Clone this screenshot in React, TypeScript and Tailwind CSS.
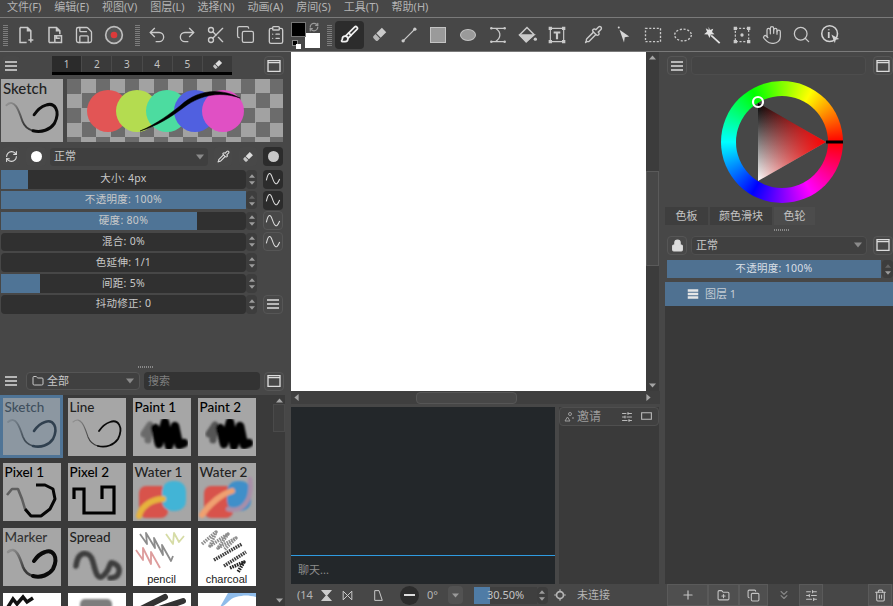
import { Brush, ChevronsDown, ClipboardList, Copy, Folder, FolderPlus, Hand, Lock, Pipette, Plus, RefreshCw, Redo2, Save, Scissors, Search, SlidersHorizontal, Trash2, Undo2 } from 'lucide-react'
import type { ReactNode } from 'react'

const cjk = "font-['Noto_Sans','Noto_Sans_CJK_SC',sans-serif]"

function Svg({ children, size = 20 }: { children: ReactNode; size?: number }) {
  return (
    <svg width={size} height={size} viewBox="0 0 24 24" fill="none" stroke="currentColor" strokeWidth="2">
      {children}
    </svg>
  )
}

function Arrow({ dir, size = 7 }: { dir: 'up' | 'down' | 'left' | 'right'; size?: number }) {
  const points = { up: '0,8 10,8 5,2', down: '0,2 10,2 5,8', left: '8,0 8,10 2,5', right: '2,0 2,10 8,5' }
  return (
    <svg width={size} height={size} viewBox="0 0 10 10" fill="currentColor">
      <polygon points={points[dir]} />
    </svg>
  )
}

function MenuIcon({ size = 16, weight = 2.6 }: { size?: number; weight?: number }) {
  return (
    <Svg size={size}>
      <path d="M3 6h18M3 12h18M3 18h18" strokeWidth={weight} />
    </Svg>
  )
}

function WindowIcon() {
  return (
    <Svg size={16}>
      <path d="M3 4h18v16H3zM3 7h18" strokeWidth="2" />
    </Svg>
  )
}

function SineIcon() {
  return (
    <Svg size={16}>
      <path d="M2 14C5 1 8 1 11 10s6 14 11 2" strokeWidth="1.6" />
    </Svg>
  )
}

function EraserIcon({ size = 19 }: { size?: number }) {
  return (
    <svg width={size} height={size} viewBox="0 0 24 24" fill="currentColor">
      <path d="M15 3.5l5.5 5.5-7 7L8 10.5z" />
      <path d="M7 11.5l5.5 5.5-2.5 2.500a2 2 0 0 1-2.800 0l-2.700-2.700a2 2 0 0 1 0-2.800z" opacity="0.85" />
    </svg>
  )
}

function WandIcon() {
  return (
    <svg width="20" height="20" viewBox="0 0 24 24" fill="currentColor">
      <path d="M12 12l10 9-1.5 1.5L10 13z" />
      <path d="M8 2l1.5 4 4-1.5L12 8.5l3 2.5-4.5.5-1.5 4-2-4-4.5-.5 3.500-3L4.500 4 8 6z" />
    </svg>
  )
}

function PanelButton({ children, className = '' }: { children: ReactNode; className?: string }) {
  return (
    <div className={'flex items-center justify-center h-[19px] w-[20px] shrink-0 rounded-sm border border-[#565656] bg-[#484848] text-[#dcdcdc] ' + className}>
      {children}
    </div>
  )
}

function Grip() {
  return <div className="w-[5px] h-[22px] shrink-0 bg-[repeating-linear-gradient(0deg,#7d7d7d_0_1px,transparent_1px_2px)]" />
}

function Tool({ children, active }: { children: ReactNode; active?: boolean }) {
  return (
    <div className={'flex items-center justify-center w-[29.6px] h-[28px] shrink-0 rounded-sm ' + (active ? 'bg-[#2c2c2c] text-[#f0f0f0]' : 'text-[#cacaca]')}>
      {children}
    </div>
  )
}

function Spinner({ dim }: { dim?: boolean }) {
  return (
    <div className="flex flex-col items-center justify-center gap-px w-[11px] shrink-0 h-full rounded-sm bg-[#3d3d3d] text-[#9c9c9c]">
      <span className={dim ? 'opacity-40' : ''}><Arrow dir="up" size={6} /></span>
      <Arrow dir="down" size={6} />
    </div>
  )
}

const menus = ['文件(F)', '编辑(E)', '视图(V)', '图层(L)', '选择(N)', '动画(A)', '房间(S)', '工具(T)', '帮助(H)']

const sliders = [
  { label: '大小: 4px', pct: 11, curve: 'dark' },
  { label: '不透明度: 100%', pct: 100, curve: 'dark' },
  { label: '硬度: 80%', pct: 80, curve: 'line' },
  { label: '混合: 0%', pct: 0, curve: 'line' },
  { label: '色延伸: 1/1', pct: 0, curve: 'none' },
  { label: '间距: 5%', pct: 16, curve: 'none' },
  { label: '抖动修正: 0', pct: 0, curve: 'menu' },
]

function SliderRow({ label, pct, curve }: { label: string; pct: number; curve: string }) {
  return (
    <div className="flex items-center h-[18.6px] pl-px">
      <div className="relative flex items-center justify-center w-[245px] h-full rounded-sm bg-[#303030] text-[10.5px] tracking-[0.3px] text-[#c9c9c9]">
        <div className="absolute left-0 top-0 bottom-0 bg-[#4f7496]" style={{ width: pct + '%' }} />
        <span className="relative">{label}</span>
      </div>
      <Spinner dim={pct === 100} />
      {curve === 'dark' && <div className="ml-[6px] flex items-center justify-center w-[20px] h-[19px] rounded-sm bg-[#2c2c2c] text-[#dcdcdc]"><SineIcon /></div>}
      {curve === 'line' && <PanelButton className="ml-[6px]"><SineIcon /></PanelButton>}
      {curve === 'menu' && <PanelButton className="ml-[6px]"><MenuIcon /></PanelButton>}
    </div>
  )
}

function Stroke({ id, width = 2.6, thin = 1.6, color = '#0a0a0a' }: { id: string; width?: number; thin?: number; color?: string }) {
  return (
    <>
      <defs>
        <linearGradient id={id} gradientUnits="userSpaceOnUse" x1="5" y1="24" x2="22" y2="42">
          <stop offset="0" stopColor="#8f8f8f" />
          <stop offset="1" stopColor="#3a3a3a" />
        </linearGradient>
      </defs>
      <path d="M5 24C13 17 17 30 20 39C22 44 26 47 30 48" fill="none" stroke={'url(#' + id + ')'} strokeWidth={thin} strokeLinecap="round" />
      <path d="M30 48C38 50 46 47 50 41C56 29 50 21 42 24C36 26 33 30 31 33" fill="none" stroke={color} strokeWidth={width} strokeLinecap="round" />
    </>
  )
}

function Art({ name }: { name: string }) {
  if (name === 'Sketch') return <Stroke id="s1" width={2.6} thin={1.8} color="#232a31" />
  if (name === 'Line') return <Stroke id="s2" width={1.8} thin={1.1} />
  if (name === 'Marker') return <Stroke id="s3" width={4} thin={2.6} />
  if (name === 'Pixel 1')
    return (
      <g fill="none" strokeWidth="2.6" strokeLinejoin="bevel">
        <path d="M4 32L9 26L15 26L19 36L22 46" stroke="#5f5f5f" />
        <path d="M22 46L28 53L38 53L47 46L52 36L50 26L42 22L33 22" stroke="#050505" strokeWidth="3" />
      </g>
    )
  if (name === 'Pixel 2')
    return <path d="M6 36V26H16V50H46V24H34V36" fill="none" stroke="#000" strokeWidth="3.2" />
  if (name === 'Paint 1' || name === 'Paint 2')
    return (
      <g fill="none" strokeLinecap="round" strokeLinejoin="round" filter="url(#soft)">
        <path d="M11 36L17 27L15 42" stroke={name === 'Paint 1' ? '#6a6a6a' : '#555'} strokeWidth="7" />
        <path d="M22 30L26 46L32 24L36 48L42 28L46 47L51 45" stroke="#050505" strokeWidth="8.5" />
      </g>
    )
  if (name === 'Spread')
    return <path d="M8 38C10 22 22 22 25 34S30 54 37 46S40 32 47 36S52 50 42 50" fill="none" stroke="#3c3c3c" strokeWidth="5.5" strokeLinecap="round" filter="url(#soft)" />
  if (name === 'Water 1' || name === 'Water 2')
    return (
      <g filter="url(#soft)">
        <rect x="6" y="23" width="29" height="32" rx="7" fill="#d8534c" />
        <rect x="29" y="18" width="24" height="30" rx="10" fill={name === 'Water 1' ? '#42b4d6' : '#3f8fc9'} />
        <path d={name === 'Water 1' ? 'M6 53C8 44 18 36 30 36' : 'M4 52C12 40 24 31 34 28'} fill="none" stroke={name === 'Water 1' ? '#e6b23c' : '#f0a070'} strokeWidth="6" strokeLinecap="round" />
        {name === 'Water 2' && <path d="M30 46C44 50 55 38 52 16" fill="none" stroke="#a88fa8" strokeWidth="4.5" strokeLinecap="round" />}
      </g>
    )
  if (name === 'pencil')
    return (
      <g fill="none" strokeWidth="1.8" strokeLinejoin="round">
        <path d="M7 6L14 16L13 5L22 20L21 10L30 27L29 17L38 33L40 28" stroke="#8c8c8c" />
        <path d="M33 6L40 16L41 5L46 14L51 8" stroke="#d6dca6" />
        <path d="M3 22L10 32L10 20L18 36L18 24L27 40" stroke="#dd9c9c" />
      </g>
    )
  if (name === 'charcoal')
    return (
      <g fill="none" strokeDasharray="1.6 0.9" strokeLinejoin="round">
        <path d="M4 16L18 4L12 18L30 6L20 20L38 10L26 22" stroke="#8f8f8f" strokeWidth="3.5" />
        <path d="M16 32L44 16M26 38L48 24" stroke="#3c3c3c" strokeWidth="3.5" />
        <path d="M32 40L46 34L40 44" stroke="#222" strokeWidth="3.5" />
      </g>
    )
  if (name === 'ink') return <path d="M5 14L10 6L14 11L20 4L24 9L30 5" fill="none" stroke="#111" strokeWidth="3.5" />
  if (name === 'soft') return <rect x="12" y="6" width="32" height="14" rx="5" fill="#7d7d7d" filter="url(#soft)" />
  if (name === 'flat') return <path d="M6 17L32 4M20 18L50 8" stroke="#333" strokeWidth="6" strokeLinecap="round" />
  if (name === 'sky') return <path d="M22 14C30 12 30 6 38 4S50 2 58 4V14H58V0H30Z" fill="#8fbcea" />
  return null
}

const brushes = [
  { name: 'Sketch', label: 'Sketch', bg: 'bg-[#a6a6a6]', text: 'text-[#383f46]' },
  { name: 'Line', label: 'Line', bg: 'bg-[#a6a6a6]', text: 'text-[#222]' },
  { name: 'Paint 1', label: 'Paint 1', bg: 'bg-[#a6a6a6]', text: 'text-black' },
  { name: 'Paint 2', label: 'Paint 2', bg: 'bg-[#a6a6a6]', text: 'text-black' },
  { name: 'Pixel 1', label: 'Pixel 1', bg: 'bg-[#a6a6a6]', text: 'text-black' },
  { name: 'Pixel 2', label: 'Pixel 2', bg: 'bg-[#a6a6a6]', text: 'text-black' },
  { name: 'Water 1', label: 'Water 1', bg: 'bg-[#a6a6a6]', text: 'text-[#222]' },
  { name: 'Water 2', label: 'Water 2', bg: 'bg-[#a6a6a6]', text: 'text-[#222]' },
  { name: 'Marker', label: 'Marker', bg: 'bg-[#a6a6a6]', text: 'text-[#333]' },
  { name: 'Spread', label: 'Spread', bg: 'bg-[#a6a6a6]', text: 'text-[#222]' },
  { name: 'pencil', foot: 'pencil', bg: 'bg-white', text: '' },
  { name: 'charcoal', foot: 'charcoal', bg: 'bg-white', text: '' },
  { name: 'ink', bg: 'bg-white', text: '' },
  { name: 'soft', bg: 'bg-white', text: '' },
  { name: 'flat', bg: 'bg-white', text: '' },
  { name: 'sky', bg: 'bg-white', text: '' },
]

function BrushThumb({ brush, selected }: { brush: (typeof brushes)[number]; selected?: boolean }) {
  return (
    <div className={'relative w-[58px] h-[58px] overflow-hidden ' + brush.bg}>
      <svg className="absolute inset-0" width="58" height="58" viewBox="0 0 58 58">
        <defs>
          <filter id="soft"><feGaussianBlur stdDeviation="1" /></filter>
        </defs>
        <Art name={brush.name} />
      </svg>
      {brush.label && <div className={"absolute left-[2px] top-0 text-[13.5px] leading-[18px] font-medium font-['Lato',sans-serif] " + brush.text}>{brush.label}</div>}
      {brush.foot && <div className="absolute bottom-0 inset-x-0 text-center text-[11px] leading-[14px] text-[#222] font-['Liberation_Sans',sans-serif]">{brush.foot}</div>}
      {selected && <div className="absolute inset-0 bg-[#4f7496]/30" />}
    </div>
  )
}

function Toolbar() {
  return (
    <div className="flex items-center h-[34px] pl-[3px] border-b border-[#7a7a7a] shrink-0">
      <Grip />
      <div className="flex ml-[2px]">
        <Tool><Svg><path d="M6 3h9l4 4v8M6 3v18h8M15 3v4h4M16 18h6M19 15v6" strokeWidth="1.8" /></Svg></Tool>
        <Tool><Svg><path d="M6 21V3h9l4 4v4M15 3v4h4M6 21h6M13 13h8v8h-8zM15 13v3h4" strokeWidth="1.8" /></Svg></Tool>
        <Tool><Save size={20} strokeWidth={1.6} /></Tool>
        <Tool>
          <svg width="20" height="20" viewBox="0 0 24 24"><circle cx="12" cy="12" r="10" fill="#555" stroke="#bdbdbd" strokeWidth="2" /><circle cx="12" cy="12" r="4" fill="#dc3a3a" /></svg>
        </Tool>
      </div>
      <div className="ml-[7px]"><Grip /></div>
      <div className="flex ml-[2px]">
        <Tool><Undo2 size={20} strokeWidth={1.6} /></Tool>
        <Tool><Redo2 size={20} strokeWidth={1.6} /></Tool>
        <Tool><Scissors size={20} strokeWidth={1.6} /></Tool>
        <Tool><Copy size={19} strokeWidth={1.6} /></Tool>
        <Tool><ClipboardList size={20} strokeWidth={1.6} /></Tool>
      </div>
      <div className="relative w-[29px] h-[29px] ml-px shrink-0">
        <div className="absolute left-[14px] top-[13px] w-[15px] h-[15px] bg-white" />
        <div className="absolute left-0 top-[2px] w-[15px] h-[15px] bg-black border border-[#777]" />
        <div className="absolute left-[1px] top-[20px] w-[6px] h-[6px] bg-black border border-[#888]" />
        <div className="absolute left-[5px] top-[24px] w-[5px] h-[5px] bg-white" />
        <div className="absolute left-[18px] top-[2px] text-[#9a9a9a]"><RefreshCw size={10} strokeWidth={3} /></div>
      </div>
      <div className="ml-[7px]"><Grip /></div>
      <div className="flex ml-[2.5px]">
        <Tool active><Brush size={19} strokeWidth={2.2} /></Tool>
        <Tool><EraserIcon /></Tool>
        <Tool><Svg><path d="M5 19L19 5" strokeWidth="1.5" /><circle cx="5" cy="19" r="2" fill="currentColor" stroke="none" /><circle cx="19" cy="5" r="2" fill="currentColor" stroke="none" /></Svg></Tool>
        <Tool><div className="w-[16px] h-[16px] bg-[#9a9a9a] border border-[#c4c4c4]" /></Tool>
        <Tool><div className="w-[16px] h-[12px] rounded-[50%] bg-[#9a9a9a] border border-[#c4c4c4]" /></Tool>
        <Tool><Svg><path d="M4 4h16M4 20h16M9 4C17 9 15 16 9 20" strokeWidth="1.5" /><circle cx="4" cy="4" r="1.5" fill="currentColor" stroke="none" /><circle cx="20" cy="4" r="1.5" fill="currentColor" stroke="none" /><circle cx="4" cy="20" r="1.5" fill="currentColor" stroke="none" /><circle cx="20" cy="20" r="1.5" fill="currentColor" stroke="none" /></Svg></Tool>
        <Tool><Svg><path d="M12 3L3 12l8 8 9-9z" strokeWidth="1.8" /><path d="M4 12h16l-9 8z" fill="currentColor" /><circle cx="22" cy="17" r="2" fill="currentColor" stroke="none" /></Svg></Tool>
        <Tool><Svg><path d="M4 4h16v16H4z" strokeWidth="1.4" /><path d="M8 9h8M12 9v8" strokeWidth="2.6" /><path d="M2 2h4v4H2zM18 2h4v4h-4zM2 18h4v4H2zM18 18h4v4h-4z" fill="currentColor" stroke="none" /></Svg></Tool>
      </div>
      <div className="flex ml-[7.6px]">
        <Tool><Pipette size={19} strokeWidth={1.8} /></Tool>
        <Tool><svg width="18" height="20" viewBox="0 0 24 24"><path d="M6 5l13 9-6 1-1 7z" fill="#d6d6d6" /><circle cx="5" cy="2" r="1.3" fill="#d6d6d6" /></svg></Tool>
        <Tool><Svg><path d="M3 4h18v16H3z" strokeWidth="1.6" strokeDasharray="2.5 2" /></Svg></Tool>
        <Tool><Svg><ellipse cx="12" cy="12" rx="10" ry="7" strokeWidth="1.6" strokeDasharray="2.5 2" /></Svg></Tool>
        <Tool><span className="text-[#e2e2e2]"><WandIcon /></span></Tool>
        <Tool><Svg><path d="M4 4h16v16H4z" strokeWidth="1.4" strokeDasharray="2.5 2" /><circle cx="12" cy="12" r="2" fill="currentColor" stroke="none" /><path d="M2 2h4v4H2zM18 2h4v4h-4zM2 18h4v4H2zM18 18h4v4h-4z" fill="currentColor" stroke="none" /></Svg></Tool>
        <Tool><Hand size={20} strokeWidth={1.5} /></Tool>
        <Tool><Search size={19} strokeWidth={1.6} /></Tool>
        <Tool><svg width="21" height="21" viewBox="0 0 24 24" fill="none"><circle cx="11" cy="11" r="9" stroke="#d2d2d2" strokeWidth="1.8" /><path d="M10 6v1M10 9v7" stroke="#d2d2d2" strokeWidth="2" /><path d="M13 12l9 5-4 1-1 4z" fill="#d2d2d2" /></svg></Tool>
      </div>
    </div>
  )
}

function LeftColumn() {
  return (
    <div className="flex flex-col w-[291px] shrink-0 relative">
      <div className="flex items-center h-[27px] pl-[2px] pr-[7px]">
        <PanelButton className="!w-[18px] border-transparent"><MenuIcon /></PanelButton>
        <div className="ml-[32px] w-[180px] h-[19px] bg-[#3a3a3a] border-b-[3px] border-black flex text-[10px] text-[#c4c4c4]">
          {['1', '2', '3', '4', '5'].map((n, i) => (
            <div key={n} className={'flex-1 flex items-center justify-center border-r border-[#4a4a4a] ' + (i === 0 ? 'bg-[#2b2b2b]' : '')}>{n}</div>
          ))}
          <div className="flex-1 flex items-center justify-center text-[#ddd]"><EraserIcon size={13} /></div>
        </div>
        <PanelButton className="ml-auto"><WindowIcon /></PanelButton>
      </div>

      <div className="flex h-[64px] pl-px">
        <div className="w-[62px] h-[63px] bg-[#a6a6a6] relative overflow-hidden">
          <svg className="absolute inset-0" width="62" height="63" viewBox="0 0 58 58"><Stroke id="s0" width={2.8} thin={1.8} /></svg>
          <div className="absolute left-[2px] top-0 text-[15px] leading-[18px] font-medium text-[#222] font-['Lato',sans-serif]">Sketch</div>
        </div>
        <div className="relative ml-[4px] w-[216px] h-[63px] bg-[repeating-conic-gradient(#a2a2a2_0_25%,#6c6c6c_0_50%)] bg-[length:29px_29px]">
          <svg className="absolute inset-0" width="216" height="63" viewBox="0 0 216 63">
            <circle cx="41" cy="32" r="21" fill="#e25555" />
            <circle cx="70" cy="32" r="21" fill="#b4dc50" />
            <circle cx="100" cy="32" r="21" fill="#4cdca0" />
            <circle cx="128" cy="32" r="21" fill="#5060e0" />
            <circle cx="156" cy="32" r="21" fill="#e050c4" />
            <path d="M73 52C90 45 104 34 114 26C128 13 150 7 173 19C150 11 130 18 116 29C104 38 90 47 73 52Z" fill="#000" stroke="#000" strokeWidth="0.5" />
          </svg>
        </div>
      </div>

      <div className="flex items-center h-[27px] pl-[2px] text-[#d2d2d2]">
        <PanelButton className="!w-[18px] border-transparent"><RefreshCw size={13} /></PanelButton>
        <PanelButton className="ml-[6px] border-transparent"><div className="w-[11px] h-[11px] rounded-full bg-white" /></PanelButton>
        <div className={'ml-[4px] w-[158px] h-[18px] flex items-center justify-between px-[4px] rounded-sm bg-[#3f3f3f] text-[11px] text-[#c9c9c9] ' + cjk}>
          正常
          <span className="text-[#8a8a8a]"><Arrow dir="down" size={8} /></span>
        </div>
        <PanelButton className="ml-[6px] !w-[18px] border-transparent"><Pipette size={13} /></PanelButton>
        <PanelButton className="ml-[7px] !w-[18px] border-transparent"><EraserIcon size={14} /></PanelButton>
        <PanelButton className="ml-[6px] !bg-[#2c2c2c] border-transparent"><div className="w-[11px] h-[11px] rounded-full bg-[#c8c8c8]" /></PanelButton>
      </div>

      <div className={'flex flex-col gap-[2.25px] ' + cjk}>
        {sliders.map((s) => (
          <SliderRow key={s.label} {...s} />
        ))}
      </div>

      <div className="flex-1 flex items-end justify-center pb-[3px]">
        <div className="w-[16px] h-[2px] bg-[repeating-linear-gradient(90deg,#8a8a8a_0_1px,transparent_1px_2px)]" />
      </div>

      <div className="h-[235px] shrink-0 flex flex-col overflow-hidden">
        <div className="flex items-center h-[20px] pl-[2px]">
          <PanelButton className="!w-[18px] border-transparent"><MenuIcon /></PanelButton>
          <div className={'ml-[6px] w-[114px] h-[18px] flex items-center px-[5px] gap-[3px] rounded-sm border border-[#555] bg-[#404040] text-[11px] text-[#c9c9c9] ' + cjk}>
            <Folder size={12} />
            全部
            <span className="ml-auto text-[#8a8a8a]"><Arrow dir="down" size={8} /></span>
          </div>
          <div className={'ml-[4px] w-[116px] h-[18px] flex items-center px-[4px] rounded-sm bg-[#333] text-[11px] text-[#7f7f7f] ' + cjk}>搜索</div>
          <PanelButton className="ml-[4px]"><WindowIcon /></PanelButton>
        </div>
        <div className="flex flex-1 mt-[4px] min-h-0">
          <div className="relative w-[273px] overflow-hidden bg-[#3a3a3a] pl-[2.5px] pt-[3px]">
            <div className="grid grid-cols-[repeat(4,58px)] gap-[7px]">
              {brushes.map((b, i) => (
                <BrushThumb key={b.name} brush={b} selected={i === 0} />
              ))}
            </div>
            <div className="absolute left-0 top-0 w-[63px] h-[63px] border-[3px] border-[#4f7496]" />
          </div>
          <div className="w-[12px] bg-[#3a3a3a] flex flex-col items-center text-[#a5a5a5] py-[2px]">
            <Arrow dir="up" />
            <div className="w-[12px] h-[28px] border border-[#4a4a4a] bg-[#3f3f3f]" />
            <div className="mt-auto"><Arrow dir="down" /></div>
          </div>
        </div>
      </div>
    </div>
  )
}

function CenterColumn() {
  return (
    <div className={'flex flex-col w-[369px] shrink-0 ' + cjk}>
      <div className="flex h-[339px]">
        <div className="w-[355px] bg-white" />
        <div className="w-[13px] bg-[#3c3c3c] flex flex-col items-center py-[2px] text-[#a5a5a5]">
          <Arrow dir="up" />
          <div className="mt-[110px] w-[13px] h-[95px] border border-[#5a5a5a] bg-[#474747]" />
          <div className="mt-auto"><Arrow dir="down" /></div>
        </div>
      </div>
      <div className="flex items-center h-[13px] bg-[#3f3f3f] text-[#a5a5a5] pl-[2px] pr-[8px]">
        <Arrow dir="left" />
        <div className="ml-[116px] w-[101px] h-[12px] rounded-sm border border-[#565656] bg-[#474747]" />
        <div className="ml-auto"><Arrow dir="right" /></div>
      </div>
      <div className="h-[3px]" />
      <div className="flex h-[177px]">
        <div className="w-[264px] flex flex-col bg-[#23272a]">
          <div className="flex-1" />
          <div className="h-px bg-[#2f9be0]" />
          <div className="h-[28px] flex items-center px-[7px] text-[11px] text-[#8d8d8d]">聊天...</div>
        </div>
        <div className="w-[4px]" />
        <div className="w-[100px] bg-[#3a3a3a]">
          <div className="flex items-center h-[19px] px-[3px] rounded-sm border border-[#4f4f4f] bg-[#404040] text-[12px] text-[#9c9c9c]">
            <Svg size={12}><circle cx="14" cy="6" r="3" /><path d="M4 20h10l-5-8zM18 14h4" /></Svg>
            <span className="ml-[2px]">邀请</span>
            <SlidersHorizontal size={12} className="ml-auto mr-[7px] text-[#bbb]" />
            <span className="mr-[2px] text-[#bbb]"><Svg size={13}><path d="M3 5h18v12H3z" /></Svg></span>
          </div>
        </div>
      </div>
      <div className="flex items-center flex-1 text-[11px] text-[#b5b5b5] pl-[6px]">
        <span>(14</span>
        <span className="ml-[7px] text-[#ccc]"><Svg size={13}><path d="M4 3h16L4 21h16z" fill="currentColor" /></Svg></span>
        <span className="ml-[8px] text-[#ccc]"><Svg size={13}><path d="M4 4l16 16M4 20L20 4M4 4v16M20 4v16" strokeWidth="1.8" /></Svg></span>
        <span className="ml-[18px] text-[#ccc]"><Svg size={13}><path d="M5 3h8l6 18H5z" strokeWidth="1.8" /></Svg></span>
        <div className="ml-[15px] w-[19px] h-[19px] rounded-full bg-[#2c2c2c] flex items-center justify-center text-[#ddd]"><div className="w-[11px] h-[2px] bg-[#ddd]" /></div>
        <span className="ml-[8px]">0°</span>
        <div className="ml-[10px] w-[15px] h-[18px] rounded-sm bg-[#525252] flex items-center justify-center text-[#9a9a9a]"><Arrow dir="down" /></div>
        <div className="relative ml-[11px] w-[63px] h-[17px] bg-[#3f3f3f] flex items-center pl-[13px] text-[#c4c4c4]">
          <div className="absolute left-0 top-0 bottom-0 w-[16px] bg-[#4f7ca6]" />
          <span className="relative">30.50%</span>
        </div>
        <div className="h-[17px]"><Spinner /></div>
        <span className="ml-[5px]"><Svg size={14}><circle cx="12" cy="12" r="6" strokeWidth="3" /><path d="M12 2v3M12 19v3M2 12h3M19 12h3" /></Svg></span>
        <span className="ml-[10px]">未连接</span>
      </div>
    </div>
  )
}

function ColorWheel() {
  return (
    <div className="relative w-[122px] h-[122px] ml-[61px]">
      <div className="absolute inset-0 rounded-full bg-[conic-gradient(from_90deg,#f00,#f0f,#00f,#0ff,#0f0,#ff0,#f00)]" />
      <div className="absolute inset-[15px] rounded-full bg-[#474747]" />
      <svg className="absolute inset-0" width="122" height="122" viewBox="0 0 122 122">
        <defs>
          <linearGradient id="tv" x1="0" y1="0" x2="0" y2="1">
            <stop offset="0" stopColor="#000" />
            <stop offset="1" stopColor="#fff" />
          </linearGradient>
          <linearGradient id="th" x1="0" y1="0" x2="1" y2="0">
            <stop offset="0" stopColor="#f00" stopOpacity="0" />
            <stop offset="1" stopColor="#f00" />
          </linearGradient>
        </defs>
        <path d="M37 22L37 100L105 61Z" fill="url(#tv)" />
        <path d="M37 22L37 100L105 61Z" fill="url(#th)" />
        <path d="M105 61h17" stroke="#000" strokeWidth="3" />
        <circle cx="37" cy="21" r="5" fill="none" stroke="#fff" strokeWidth="2.2" />
      </svg>
    </div>
  )
}

function RightColumn() {
  return (
    <div className={'flex flex-col w-[233px] shrink-0 overflow-hidden ' + cjk}>
      <div className="flex items-center h-[25px] pl-[7px] mt-[1px]">
        <PanelButton className="border-[#5a5a5a]"><MenuIcon /></PanelButton>
        <div className="ml-[4px] w-[180px] h-[19px] rounded-sm bg-[#444] border border-[#4d4d4d]" />
        <PanelButton className="ml-[7px]"><WindowIcon /></PanelButton>
      </div>
      <div className="mt-[3px]"><ColorWheel /></div>
      <div className="flex mt-[4px] ml-[5px] h-[18px] text-[11px] text-[#c4c4c4] gap-[2px]">
        <div className="w-[43px] flex items-center justify-center bg-[#3e3e3e]">色板</div>
        <div className="w-[62px] flex items-center justify-center bg-[#3e3e3e]">颜色滑块</div>
        <div className="w-[41px] flex items-center justify-center bg-[#4c4c4c]">色轮</div>
      </div>
      <div className="flex justify-start pl-[114px] h-[10px] pt-[4px]">
        <div className="w-[16px] h-[2px] bg-[repeating-linear-gradient(90deg,#8a8a8a_0_1px,transparent_1px_2px)]" />
      </div>
      <div className="flex items-center h-[20px] pl-[7px]">
        <PanelButton className="border-[#525252]"><Lock size={13} fill="#ddd" /></PanelButton>
        <div className="ml-[4px] w-[180px] h-[19px] flex items-center justify-between px-[4px] rounded-sm bg-[#404040] border border-[#4f4f4f] text-[11px] text-[#c9c9c9]">
          正常
          <span className="text-[#8a8a8a]"><Arrow dir="down" size={8} /></span>
        </div>
        <PanelButton className="ml-[6px]"><WindowIcon /></PanelButton>
      </div>
      <div className="flex h-[18px] mt-[5px] pl-[7px]">
        <div className="w-[217px] flex items-center justify-center bg-[#4f7191] text-[10.5px] tracking-[0.3px] text-[#d9dfe5]">不透明度: 100%</div>
        <div className="ml-px"><Spinner dim /></div>
      </div>
      <div className="flex-1 flex flex-col mt-[4px] ml-[5px] bg-[#393939]">
        <div className="flex items-center h-[24px] pl-[21px] bg-[#4f7191] text-[11px] text-[#c4ccd4]">
          <span className="text-[#e6e6e6]"><MenuIcon size={14} weight={4} /></span>
          <span className="ml-[5px]">图层 1</span>
        </div>
      </div>
      <div className="flex items-center h-[22px] ml-[7px] text-[#c4c4c4]">
        <div className="w-[41px] h-full flex items-center justify-center bg-[#4f4f4f] border border-[#5a5a5a]"><Plus size={14} /></div>
        <div className="w-[31px] h-full flex items-center justify-center bg-[#4f4f4f] border border-[#5a5a5a]"><FolderPlus size={13} /></div>
        <div className="w-[29px] h-full flex items-center justify-center bg-[#4f4f4f] border border-[#5a5a5a]"><Copy size={13} /></div>
        <div className="w-[31px] h-full flex items-center justify-center bg-[#444] text-[#888]"><ChevronsDown size={14} /></div>
        <div className="w-[24px] h-full flex items-center justify-center bg-[#4f4f4f] border border-[#5a5a5a]"><SlidersHorizontal size={13} /></div>
        <div className="ml-[45px] w-[24px] h-full flex items-center justify-center bg-[#4f4f4f] border border-[#5a5a5a]"><Trash2 size={13} /></div>
      </div>
    </div>
  )
}

export default function App() {
  return (
    <div className={'w-[893px] h-[606px] overflow-hidden flex flex-col bg-[#474747] ' + cjk}>
      <div className="flex items-start h-[18px] pl-[7px] gap-[13px] border-b border-[#7a7a7a] text-[11px] leading-[14px] text-[#b4b4b4] shrink-0">
        {menus.map((m) => (
          <span key={m}>{m}</span>
        ))}
      </div>
      <Toolbar />
      <div className="flex flex-1 min-h-0">
        <LeftColumn />
        <CenterColumn />
        <RightColumn />
      </div>
    </div>
  )
}
